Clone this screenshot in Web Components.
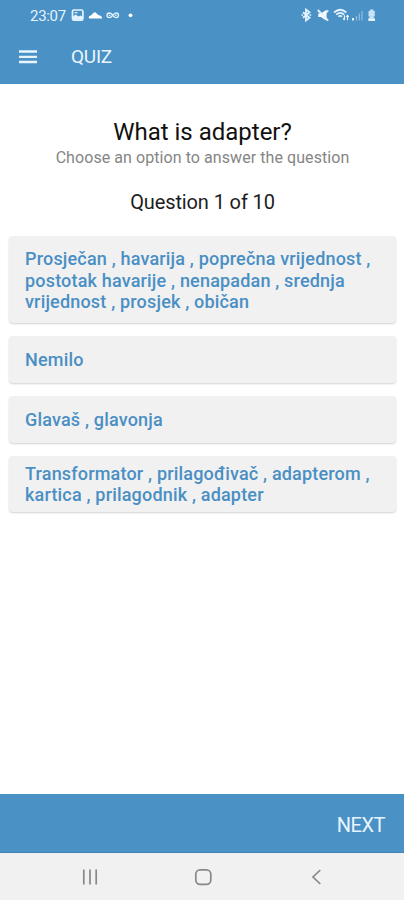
<!DOCTYPE html>
<html lang="en">
<head>
<meta charset="utf-8">
<meta name="viewport" content="width=device-width">
<title>Quiz</title>
<style>
html,body{margin:0;height:100%}
body{font-family:Roboto,"Liberation Sans",sans-serif;background:#fff;overflow:hidden}
</style>
</head>
<body>
<quiz-screen></quiz-screen>
<script>
const define = (name, html) => customElements.define(name, class extends HTMLElement {
  constructor() {
    super();
    this.attachShadow({ mode: 'open' }).innerHTML = html;
  }
});

define('status-bar', `
<style>
:host{display:flex;align-items:center;justify-content:space-between;height:31px;padding:0 26px 0 30px;color:#e3f3ff}
time{font-size:15px;line-height:18px;letter-spacing:-.3px;width:37px;margin-right:4px;white-space:nowrap}
div{display:flex;align-items:center}
svg{display:block;margin-bottom:1px}
</style>
<div>
  <time>23:07</time>
  <svg width="64" height="18" viewBox="71 6 64 18" fill="none" stroke="currentColor">
    <rect x="72.500" y="10" width="10.400" height="10.200" rx="1.500" stroke-width="1.700"/>
    <path d="M72.500 19.800v-2.900l3-2.300 3 2 2-1.200 2.500 1.500v2.900z" fill="currentColor" stroke="none"/>
    <path d="M74.500 12.700h3" stroke-width="1.200"/>
    <path d="M89.800 18.600c-2-.6-.9-2.600.9-3.100 1.400-.4 2.300-3.200 4.100-3.200 1.600 0 2.200 2.200 3.500 2.800 1.800.5 4 .9 3.700 3.500z" fill="#fff" stroke="none"/>
    <path d="M112.700 15c-1.300-1.500-2.300-2-3.400-2a2.300 2.300 0 0 0 0 4.600c1.400 0 2.400-1 3.400-2.300s2-2.300 3.500-2.300a2.300 2.300 0 0 1 0 4.600c-1.300 0-2.200-.7-3.500-2.300M108.800 15.300h1.500M115 15.300h1.500" stroke-width="1.300"/>
    <circle cx="130.500" cy="15.300" r="1.900" fill="#fff" stroke="none"/>
  </svg>
</div>
<svg width="78" height="18" viewBox="300 6 78 18" fill="none" stroke="currentColor">
  <path d="m303 12.300 6.500 5.400-3.500 2.800V9.500l3.500 2.800-6.500 5.400" stroke-width="1.800"/>
  <path d="M301.500 15h1.500M309.500 15h1.700" stroke-width="1.700"/>
  <path d="M318.300 13.500h2.700l5.500-3.700v10.900l-5.500-3.700h-2.700z" fill="#fff" stroke="none"/>
  <path d="m317.800 10 10.400 10.600" stroke-width="1.800"/>
  <path d="m325.800 13 2.400-2.600" stroke-width="1.700"/>
  <path d="M334 12.500c4-3.500 8.500-3.500 12.300 0M336.200 14.700c2.500-2.200 5.500-2.200 8 0M338.300 16.700c1.300-1 2.500-1 3.800 0" stroke-width="1.700"/>
  <path d="M344.500 15.300v4.500m-1.500-1.400 1.500 1.600M347.500 20.200v-4.700m-1.200 1.400 1.200-1.500 1.200 1.500" stroke-width="1.200"/>
  <path d="M353 18v2.500" stroke-width="2"/>
  <path d="M356.500 16v4.500M359.300 13.500v7M362 11v9.500" stroke="#8dbfe3" stroke-width="1.200"/>
  <path d="M370 9.500h3.500V11h1.300v5.500H373l2 2.200v1.800h-6.700v-1.800l1.800-2.200h-1.600V11h1.500z" fill="#c8e2f5" stroke="none"/>
  <path d="M368.500 20h6.500" stroke="#fff" stroke-width="1.500"/>
</svg>`);

define('app-bar', `
<style>
:host{display:flex;align-items:center;height:52px;padding:0 26px 0 19px;color:#e8f5ff}
svg{display:block;margin-right:34px}
span{font-size:19px;line-height:22px;letter-spacing:-.25px}
</style>
<svg width="18" height="16" viewBox="0 0 18 16" stroke="currentColor" stroke-width="2.300"><path d="M0 2.500h18M0 7.800h18M0 13h18"/></svg>
<span><slot></slot></span>`);

define('question-heading', `
<style>
:host{display:block;text-align:center;padding:34px 0 0 1px;color:#111}
h1,p{margin:0;font-weight:400;white-space:nowrap}
h1{font-size:24px;line-height:28px}
.hint{font-size:16px;line-height:20px;margin-top:2px;color:#858585;letter-spacing:.07px}
.count{font-size:20px;line-height:24px;margin-top:22px;color:#1d1d1d;letter-spacing:-.12px}
</style>
<h1><slot name="title"></slot></h1>
<p class="hint"><slot name="hint"></slot></p>
<p class="count"><slot name="count"></slot></p>`);

define('answer-option', `
<style>
:host{display:flex;align-items:center;box-sizing:border-box;padding:1px 15px 0 16px;background:#f1f1f1;border-radius:4px;
box-shadow:0 1px 2px rgba(0,0,0,.18);color:#4a8fc4;font-size:18px;font-weight:500;line-height:21.400px;letter-spacing:.18px;white-space:nowrap}
:host(:first-child){padding-top:1.600px}
:host(:last-child){padding-top:.7px}
</style>
<span><slot></slot></span>`);

define('answer-list', `
<style>
:host{display:grid;grid-template-rows:87px 47px 47px 56px;row-gap:13px;padding:0 8px 0 9px;margin-top:22px}
</style>
<slot></slot>`);

define('action-bar', `
<style>
:host{display:flex;align-items:center;justify-content:flex-end;box-sizing:border-box;height:59px;padding:3px 19px 0 0;background:#4a91c6;color:#e8f5ff;font-size:20px;line-height:24px;letter-spacing:-.45px;border-bottom:1px solid #4385b8}
</style>
<span><slot></slot></span>`);

define('system-nav', `
<style>
:host{display:flex;height:47px;background:#f1f1f1;color:#888}
svg{display:block}
</style>
<svg width="404" height="47" viewBox="0 853 404 47" fill="none" stroke="currentColor" stroke-width="1.700">
  <path d="M83.800 869.500v15M90 869.500v15M96.200 869.500v15"/>
  <rect x="195.800" y="869.800" width="15" height="14.600" rx="4.300"/>
  <path d="m320.300 870-7.300 7 7.300 7"/>
</svg>`);

define('quiz-screen', `
<style>
:host{display:flex;flex-direction:column;width:404px;height:900px}
header{background:#4a91c6;height:84px}
main{flex:1}
</style>
<header><status-bar></status-bar><app-bar>QUIZ</app-bar></header>
<main>
  <question-heading>
    <span slot="title">What is adapter?</span>
    <span slot="hint">Choose an option to answer the question</span>
    <span slot="count">Question 1 of 10</span>
  </question-heading>
  <answer-list>
    <answer-option>Prosječan , havarija , poprečna vrijednost ,<br>postotak havarije , nenapadan , srednja<br>vrijednost , prosjek , običan</answer-option>
    <answer-option>Nemilo</answer-option>
    <answer-option>Glavaš , glavonja</answer-option>
    <answer-option>Transformator , prilagođivač , adapterom ,<br>kartica , prilagodnik , adapter</answer-option>
  </answer-list>
</main>
<action-bar>NEXT</action-bar>
<system-nav></system-nav>`);
</script>
</body>
</html>
